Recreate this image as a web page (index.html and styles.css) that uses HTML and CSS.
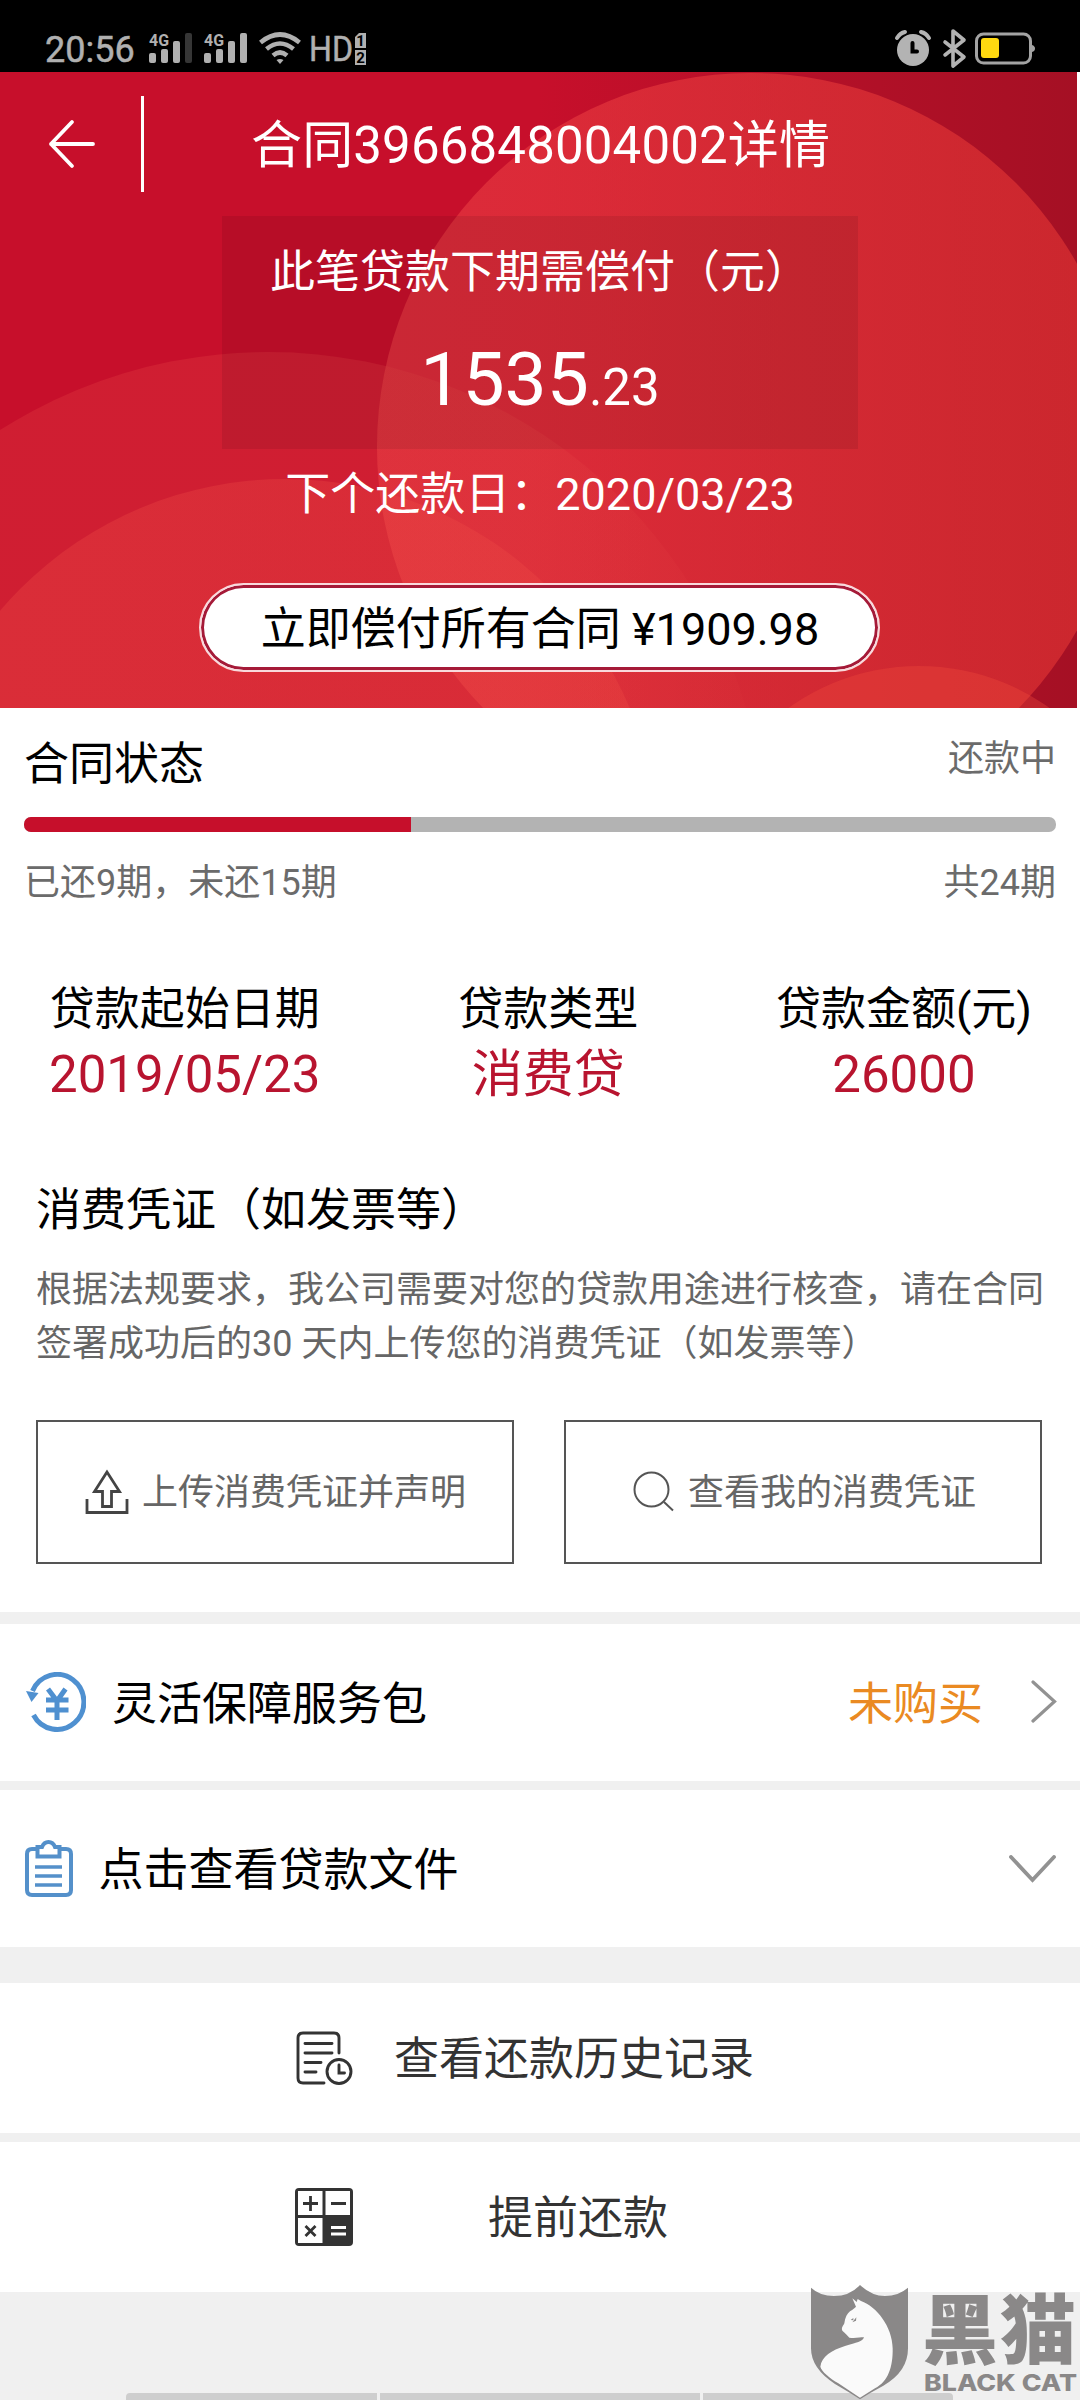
FILE: index.html
```html
<!DOCTYPE html>
<html lang="zh-CN">
<head>
<meta charset="utf-8">
<title>合同详情</title>
<link rel="stylesheet" href="styles.css">
</head>
<body>
<div class="screen">
  <div class="status-bar">
    <div class="status-left">
      <span class="clock">20:56</span>
      <svg class="signal" width="44" height="32" viewBox="0 0 44 32">
        <text x="0" y="13.5" class="net" textLength="20" lengthAdjust="spacingAndGlyphs">4G</text>
        <g fill="#b0b0b0"><rect x="0" y="21" width="7" height="10" rx="2"/><rect x="12" y="17" width="7" height="14" rx="2"/><rect x="24" y="9" width="7" height="22" rx="2"/></g>
        <rect x="36" y="1" width="7" height="30" rx="2" fill="#363636"/>
      </svg>
      <svg class="signal second" width="44" height="32" viewBox="0 0 44 32">
        <text x="0" y="13.5" class="net" textLength="20" lengthAdjust="spacingAndGlyphs">4G</text>
        <g fill="#b0b0b0"><rect x="0" y="21" width="7" height="10" rx="2"/><rect x="12" y="17" width="7" height="14" rx="2"/><rect x="24" y="9" width="7" height="22" rx="2"/><rect x="36" y="1" width="7" height="30" rx="2"/></g>
      </svg>
      <svg class="wifi" width="42" height="33" viewBox="0 0 42 33" fill="none" stroke="#b0b0b0" stroke-width="4.6">
        <path d="M1.5 10.500Q21-5.500 40.500 10.500"/><path d="M7.500 17Q21 6 34.500 17"/><path d="M14 23.500Q21 17.500 28 23.500"/>
        <path d="M17.500 28Q21 26 24.500 28L21 32Z" fill="#b0b0b0" stroke="none"/>
      </svg>
      <svg class="hd" width="56" height="34" viewBox="0 0 56 34">
        <text x="-2" y="29" class="hd-text" textLength="44" lengthAdjust="spacingAndGlyphs">HD</text>
        <path d="M44 5l4-4h7v15H44zM44 18h11v15H44z" fill="#b0b0b0"/>
        <text x="49.500" y="13.500" class="sim">1</text><text x="49.500" y="30.500" class="sim">2</text>
      </svg>
    </div>
    <svg class="status-right" width="142" height="40" viewBox="0 0 142 40">
      <circle cx="18" cy="21" r="16" fill="#b3b3b3"/>
      <path d="M2 9Q5 4 10 3M34 9Q31 4 26 3" fill="none" stroke="#b3b3b3" stroke-width="4" stroke-linecap="round"/>
      <path d="M17.500 14v8.500h4.500" fill="none" stroke="#000" stroke-width="4" stroke-linecap="round"/>
      <path d="M50 13L69 28L58 37V2L69 11L50 26" fill="none" stroke="#b3b3b3" stroke-width="3.6" stroke-linejoin="round" stroke-linecap="round"/>
      <rect x="81.500" y="5" width="54" height="29" rx="7" fill="none" stroke="#a3a3a3" stroke-width="3"/>
      <path d="M137 16q3 1 3 3.500t-3 3.500z" fill="#a3a3a3"/>
      <rect x="86" y="9" width="18" height="20" rx="3" fill="#ffd910"/>
    </svg>
  </div>

  <header class="hero">
    <svg class="hero-art" width="1077" height="636" viewBox="0 72 1077 636">
      <defs>
        <linearGradient id="base"><stop offset=".5" stop-color="#c70f2b"/><stop offset=".75" stop-color="#b41028"/><stop offset="1" stop-color="#a51024"/></linearGradient>
        <linearGradient id="big"><stop offset="0" stop-color="#ec4146"/><stop offset="1" stop-color="#e93834"/></linearGradient>
        <linearGradient id="wide" gradientUnits="userSpaceOnUse" x1="0" y1="0" x2="760" y2="0"><stop offset="0" stop-color="#e44142" stop-opacity=".3"/><stop offset=".7" stop-color="#e44142" stop-opacity=".3"/><stop offset="1" stop-color="#e44142" stop-opacity=".06"/></linearGradient>
        <linearGradient id="low" gradientUnits="userSpaceOnUse" x1="0" y1="0" x2="640" y2="0"><stop offset="0" stop-color="#f15046" stop-opacity=".3"/><stop offset="1" stop-color="#f15046" stop-opacity=".26"/></linearGradient>
      </defs>
      <rect y="72" width="1077" height="636" fill="url(#base)"/>
      <circle cx="751" cy="447" r="374" fill="url(#big)" fill-opacity=".57"/>
      <circle cx="268" cy="851" r="499" fill="url(#wide)"/>
      <circle cx="285" cy="853" r="374" fill="url(#low)"/>
      <circle cx="919" cy="890" r="224" fill="#f04a3c" fill-opacity=".35"/>
    </svg>
    <div class="nav">
      <svg class="back" width="48" height="50" viewBox="0 0 48 50" fill="none" stroke="#fff" stroke-width="3.8" stroke-linecap="round" stroke-linejoin="round"><path d="M45 25H3M24 3L3 25L24 47"/></svg>
      <h1>合同3966848004002详情</h1>
    </div>
    <div class="due">
      <div class="due-label">此笔贷款下期需偿付（元）</div>
      <div class="due-amount">1535<span>.23</span></div>
    </div>
    <div class="next-date">下个还款日：2020/03/23</div>
    <div class="pay-all">立即偿付所有合同 ¥1909.98</div>
  </header>

  <section class="progress">
    <div class="progress-head"><h2>合同状态</h2><span>还款中</span></div>
    <div class="track"><div class="fill" style="width:37.5%"></div></div>
    <div class="progress-foot"><span>已还9期，未还15期</span><span>共24期</span></div>
  </section>

  <section class="facts">
    <div><p>贷款起始日期</p><b>2019/05/23</b></div>
    <div><p>贷款类型</p><b>消费贷</b></div>
    <div><p>贷款金额(元)</p><b>26000</b></div>
  </section>

  <section class="voucher">
    <h2>消费凭证（如发票等）</h2>
    <p>根据法规要求，我公司需要对您的贷款用途进行核查，请在合同<br>签署成功后的30 天内上传您的消费凭证（如发票等）</p>
    <div class="actions">
      <div class="action">
        <svg class="upload" width="44" height="46" viewBox="0 0 44 46" fill="none" stroke="#444" stroke-width="2.800"><path d="M2 30V43.500H42V30"/><path d="M22 3L9.500 22.500H17.500V37.500H26.500V22.500H34.500Z"/></svg>
        <span>上传消费凭证并声明</span>
      </div>
      <div class="action">
        <svg class="search" width="42" height="42" viewBox="0 0 42 42" fill="none" stroke="#555" stroke-width="2"><circle cx="18.500" cy="18.500" r="17"/><path d="M31 31L40 39.500"/></svg>
        <span>查看我的消费凭证</span>
      </div>
    </div>
  </section>

  <div class="row">
    <svg class="refund" width="60" height="62" viewBox="0 0 60 62" fill="none" stroke="#4f90d0" stroke-width="5"><path d="M6.500 19A26.800 27.500 0 1 1 7.500 43"/><path d="M0 19L12.500 21L5.500 30Z" fill="#4f90d0" stroke="none"/><path d="M22 17L31 29L39.500 17M31 29V48M20 28H42.500M20 38H42.500" stroke-width="5"/></svg>
    <span class="row-title">灵活保障服务包</span>
    <span class="row-note">未购买</span>
    <svg class="chev" width="26" height="44" viewBox="0 0 26 44" fill="none" stroke="#929292" stroke-width="3.200" stroke-linecap="round"><path d="M2 2L23.500 21.500L2 41"/></svg>
  </div>
  <div class="row">
    <svg class="clip" width="50" height="58" viewBox="0 0 50 58" fill="none" stroke="#5490ca" stroke-width="4"><path d="M13 9H8Q3 9 3 14V50Q3 55 8 55H42Q47 55 47 50V14Q47 9 42 9H36"/><path d="M13.500 7H18Q20 2 24.500 2T31 7H35.500V16.500H13.500Z"/><path d="M11 27H38M11 36H38M11 45H38" stroke-width="3.400"/></svg>
    <span class="row-title">点击查看贷款文件</span>
    <svg class="chev-down" width="48" height="28" viewBox="0 0 48 28" fill="none" stroke="#929292" stroke-width="3.800" stroke-linecap="round"><path d="M2 2L23.500 25L45 2"/></svg>
  </div>
  <div class="row menu history">
    <svg width="58" height="54" viewBox="0 0 58 54" fill="none" stroke="#333" stroke-width="2.900" stroke-linecap="round"><path d="M44 22V7Q44 2 39 2H8Q3 2 3 7V47Q3 52 8 52H29"/><path d="M10 12.500H37M10 22H37M10 31.500H26M10 41H21"/><circle cx="44" cy="40.500" r="12"/><path d="M44 34V42H49.500"/></svg>
    <span>查看还款历史记录</span>
  </div>
  <div class="row menu early">
    <svg width="60" height="60" viewBox="1 0 60 60"><rect x="1" y="1" width="58" height="58" rx="4" fill="#333"/><path d="M4 4H28.500V28H4zM31.500 4H56V28H31.500zM4 31H28.500V56H4z" fill="#fff"/><g fill="none" stroke="#333" stroke-width="2.800"><path d="M9 16.500H24M16.500 9V24M37 16.500H52M11.500 39L21.500 49M21.500 39L11.500 49"/></g><path d="M37 40.500H52M37 47H52" stroke="#fff" stroke-width="3"/></svg>
    <span>提前还款</span>
  </div>

  <footer class="peek"><i></i><i></i><i></i></footer>

  <div class="watermark">
    <svg width="108" height="120" viewBox="144 126 324 360">
      <path d="M153 143Q180 168 222 168Q270 168 300 135Q335 168 375 168Q415 168 444 143V325Q444 395 370 437Q330 458 300 478Q265 455 225 432Q153 385 153 325Z" fill="#8a8888"/>
      <path d="M277 175L290 186L293 177L303 183C350 200 397 260 398 325C399 380 385 425 345 445L300 473L235 430C210 415 185 395 181 380C185 350 215 330 255 318C290 308 308 305 312 292C300 292 285 295 268 293C262 285 255 280 247 272C243 262 250 258 253 250C255 232 262 220 270 214C280 207 284 204 288 200Z" fill="#fafafa"/>
      <path d="M272 240L280 234V241ZM277 247L289 232L288 242Z" fill="#8a8888"/>
    </svg>
    <div class="brand">
      <div class="brand-cn">黑猫</div>
      <svg width="154" height="22" viewBox="0 0 154 22"><text x="0" y="18" class="brand-en" textLength="153" lengthAdjust="spacingAndGlyphs">BLACK CAT</text></svg>
    </div>
  </div>
</div>
</body>
</html>
```
FILE: styles.css
```css
* { box-sizing: border-box; margin: 0; padding: 0; }
body { background: #fff; font-family: Roboto, "Noto Sans CJK SC", sans-serif; color: #000; }
svg { display: block; flex: none; }
h1, h2, b { font-weight: 400; }
.screen { position: relative; width: 1080px; height: 2400px; overflow: hidden; display: flex; flex-direction: column; background: #fff; }
.screen > * { flex: none; }

.status-bar { height: 72px; background: #000; display: flex; justify-content: space-between; align-items: flex-start; padding: 0 44px 0 45px; }
.status-bar svg { overflow: visible; }
.status-left { display: flex; align-items: flex-start; padding-top: 32px; }
.clock { font-size: 36px; line-height: 36px; color: #b0b0b0; width: 104px; -webkit-text-stroke: .5px #b0b0b0; }
.second { margin-left: 11px; }
.wifi { margin-left: 11px; }
.hd { margin-left: 10px; }
.net { font: 700 17px Roboto, sans-serif; fill: #b0b0b0; }
.hd-text { font: 400 35px Roboto, sans-serif; fill: #b0b0b0; stroke: #b0b0b0; stroke-width: .5px; }
.sim { font: 700 15px Roboto, sans-serif; fill: #000; text-anchor: middle; }
.status-right { margin-top: 29px; margin-right: -1px; }

.hero { position: relative; height: 636px; display: flex; flex-direction: column; align-items: center; color: #fff; }
.hero-art { position: absolute; left: 0; top: 0; overflow: hidden; }
.hero > div { position: relative; }
.nav { width: 100%; height: 144px; display: flex; align-items: center; padding-left: 48px; }
.back { margin-right: 45px; }
.nav h1 { height: 96px; border-left: 3px solid #fff; padding-left: 107px; font-size: 51px; line-height: 100px; letter-spacing: .15px; white-space: nowrap; }
.due { width: 636px; height: 233px; background: rgba(0, 0, 0, .08); text-align: center; padding-top: 30px; }
.due-label { font-size: 45px; line-height: 54px; }
.due-amount { font-size: 75px; line-height: 100px; margin-top: 29px; }
.due-amount span { font-size: 51px; }
.next-date { font-size: 45px; line-height: 60px; margin-top: 16px; }
.pay-all { width: 681px; height: 89px; margin-top: 58px; margin-right: 2px; padding-left: 2px; border: 2px solid #f9d9dc; border-radius: 45px; background: #fff; box-shadow: inset 0 0 0 3px #a51a38; color: #000; text-align: center; font-size: 45px; line-height: 89px; }

.progress { height: 224px; padding: 0 24px; color: #6b6b6b; font-size: 36px; }
.progress-head { height: 109px; display: flex; justify-content: space-between; align-items: flex-start; }
.progress-head h2 { font-size: 45px; line-height: 60px; padding-top: 27px; color: #000; }
.progress-head span { line-height: 50px; padding-top: 26px; }
.track { height: 15px; border-radius: 7px; background: #b3b3b3; overflow: hidden; }
.fill { height: 15px; background: #c60f2b; }
.progress-foot { display: flex; justify-content: space-between; line-height: 50px; margin-top: 26px; }

.facts { display: flex; justify-content: space-between; padding: 48px 48px 0 49px; height: 226px; text-align: center; }
.facts p { font-size: 45px; line-height: 60px; }
.facts b { display: block; font-size: 51px; line-height: 60px; margin-top: 5px; color: #b8142f; }

.voucher { height: 454px; padding: 23px 36px 0; color: #666; }
.voucher h2 { font-size: 45px; line-height: 60px; color: #000; }
.voucher p { font-size: 36px; line-height: 54px; margin-top: 22px; white-space: nowrap; }
.actions { display: flex; gap: 50px; margin-top: 49px; }
.action { width: 478px; height: 144px; border: 2px solid #555; display: flex; align-items: center; justify-content: center; font-size: 36px; line-height: 50px; white-space: nowrap; }
.upload { margin: 0 13px 0 1px; }
.search { margin: 0 13px 0 3px; }
.action span { padding-top: 2px; }

.row { height: 166px; border-top: 9px solid #f0f0f0; display: flex; align-items: center; padding: 0 24px; font-size: 45px; line-height: 60px; }
.voucher + .row { height: 169px; border-top-width: 12px; }
.row span { padding-top: 4px; }
.row-title { flex: 1; }
.refund { margin: 1px 26px 0 2px; }
.row-note { color: #ea8a22; margin-right: 48px; }
.chev { margin: 0 -1px 2px 0; }
.clip { margin-right: 24.5px; }
.chev-down { margin-right: -1px; }
.menu { color: #333; padding-left: 295px; height: 159px; }
.history { height: 186px; border-top-width: 36px; }
.history span { margin-left: 41px; }
.early span { margin-left: 133px; padding-top: 3px; }

.peek { height: 108px; background: #f0f0f0; display: flex; align-items: flex-end; gap: 3px; padding-left: 126px; }
.peek i { height: 7px; background: #cecece; width: 320px; }
.peek i:first-child { width: 251px; border-top-left-radius: 4px; }
.peek i:last-child { width: 250px; border-top-right-radius: 4px; }

.watermark { position: absolute; right: 0; bottom: -2px; display: flex; color: #8a8888; }
.brand { width: 156px; margin-left: 8px; }
.brand-cn { font: 900 76px/86px "Noto Sans CJK SC", sans-serif; letter-spacing: 2px; height: 91px; margin-left: -2px; white-space: nowrap; }
.brand-en { font: 800 23px Inter, sans-serif; fill: #8a8888; }
```
